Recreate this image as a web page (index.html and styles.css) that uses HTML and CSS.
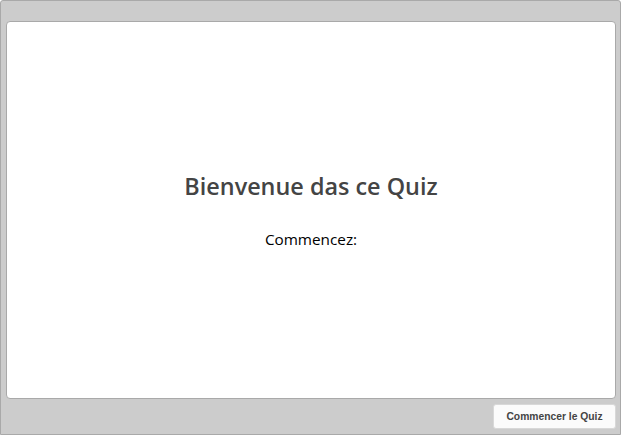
FILE: index.html
```html
<!DOCTYPE html>
<html lang="fr">
<head>
<meta charset="utf-8">
<title>Quiz</title>
<link rel="stylesheet" href="styles.css">
</head>
<body>
<div class="window">
  <main class="panel">
    <h1 class="title">Bienvenue das ce Quiz</h1>
    <p class="lead">Commencez:</p>
  </main>
  <footer class="footer">
    <button class="start-btn" type="button">Commencer le Quiz</button>
  </footer>
</div>
</body>
</html>
```

FILE: styles.css
```css
html, body {
  margin: 0;
  padding: 0;
  background: #ffffff;
}

.window {
  box-sizing: border-box;
  width: 621px;
  height: 435px;
  background: #cccccc;
  border: 1px solid #a9a9a9;
  border-radius: 3px 3px 0 0;
  padding: 20px 4px 5px 5px;
  display: flex;
  flex-direction: column;
}

.panel {
  box-sizing: border-box;
  height: 379px;
  background: #ffffff;
  border: 1px solid #a9a9a9;
  border-radius: 4px;
  display: flex;
  flex-direction: column;
  align-items: center;
  padding-top: 148px;
}

.title {
  margin: 0;
  font-family: "Open Sans", sans-serif;
  font-weight: 600;
  font-size: 23.4px;
  line-height: 32px;
  color: #444444;
}

.lead {
  margin: 27px 0 0;
  font-family: "Open Sans", sans-serif;
  font-size: 15.3px;
  line-height: 20px;
  color: #000000;
}

.footer {
  display: flex;
  justify-content: flex-end;
  padding-top: 5px;
}

.start-btn {
  box-sizing: border-box;
  height: 25px;
  width: 123px;
  background: #fbfbfb;
  border: 1px solid #d8d8d8;
  border-radius: 3px;
  font-family: "Liberation Sans", Arial, sans-serif;
  font-weight: bold;
  font-size: 10.3px;
  color: #444444;
  padding: 0;
}
```
